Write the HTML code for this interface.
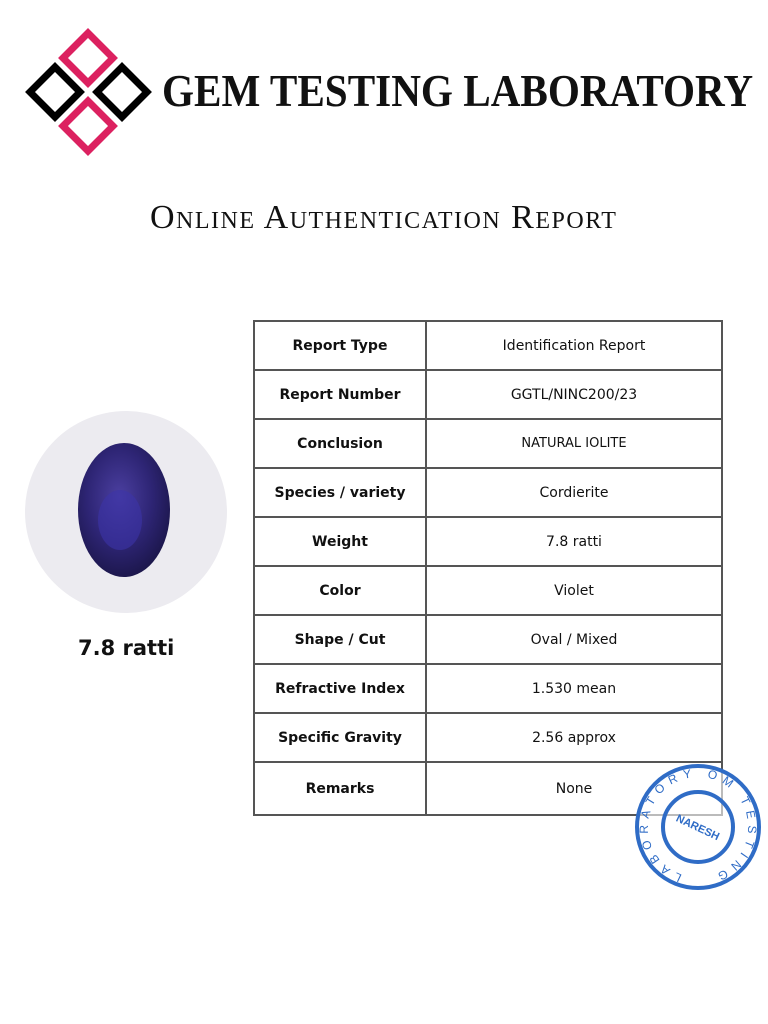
<!DOCTYPE html>
<html><head><meta charset="utf-8"><style>
body{margin:0;width:768px;height:1024px;background:#fff;position:relative;overflow:hidden;font-family:"Liberation Sans",sans-serif}
.t{position:absolute}
table{position:absolute;left:253px;top:320px;border-collapse:collapse;font-family:"DejaVu Sans","Liberation Sans",sans-serif;font-size:14px;color:#111}
td{border:2px solid #555;text-align:center;height:47px;padding:0}
td.a{width:170px;font-weight:bold}
td.b{width:294px}
</style></head><body>
<svg class="t" style="left:0;top:0" width="160" height="160">
<g fill="none" stroke-width="7">
<polygon points="88,33 113,58 88,83 63,58" stroke="#dc2160"/>
<polygon points="88,101 113,126 88,151 63,126" stroke="#dc2160"/>
<polygon points="55,67 80,92 55,117 30,92" stroke="#000"/>
<polygon points="122,67 147,92 122,117 97,92" stroke="#000"/>
</g></svg>
<div class="t" style="left:162px;top:64px;font-family:'Liberation Serif',serif;font-weight:bold;font-size:46px;color:#111;white-space:nowrap;transform:scaleX(0.895);transform-origin:0 0">GEM TESTING LABORATORY</div>
<div class="t" style="left:150px;top:199px;font-family:'Liberation Serif',serif;font-variant:small-caps;font-size:34px;color:#111;letter-spacing:1.5px;white-space:nowrap">Online Authentication Report</div>
<svg class="t" style="left:25px;top:410px" width="204" height="204">
<defs><radialGradient id="g" cx="45%" cy="40%" r="70%"><stop offset="0" stop-color="#4b3fa0"/><stop offset="0.5" stop-color="#2e2575"/><stop offset="1" stop-color="#16123e"/></radialGradient></defs>
<circle cx="101" cy="102" r="101" fill="#ecebf0"/>
<ellipse cx="99" cy="100" rx="46" ry="67" fill="url(#g)"/>
<ellipse cx="95" cy="110" rx="22" ry="30" fill="#3c33a8" opacity="0.6"/>
</svg>
<div class="t" style="left:78px;top:636px;font-family:'DejaVu Sans',sans-serif;font-weight:bold;font-size:21px;color:#111">7.8 ratti</div>
<table>
<tr><td class="a">Report Type</td><td class="b">Identification Report</td></tr>
<tr><td class="a">Report Number</td><td class="b">GGTL/NINC200/23</td></tr>
<tr><td class="a">Conclusion</td><td class="b" style="font-size:13px">NATURAL IOLITE</td></tr>
<tr><td class="a">Species / variety</td><td class="b">Cordierite</td></tr>
<tr><td class="a">Weight</td><td class="b">7.8 ratti</td></tr>
<tr><td class="a">Color</td><td class="b">Violet</td></tr>
<tr><td class="a">Shape / Cut</td><td class="b">Oval / Mixed</td></tr>
<tr><td class="a">Refractive Index</td><td class="b">1.530 mean</td></tr>
<tr><td class="a">Specific Gravity</td><td class="b">2.56 approx</td></tr>
<tr><td class="a" style="height:51px">Remarks</td><td class="b">None</td></tr>
</table>
<svg class="t" style="left:630px;top:759px" width="136" height="136">
<defs><path id="c" d="M68,118 a50,50 0 1,1 0,-100 a50,50 0 1,1 0,100"/></defs>
<circle cx="68" cy="68" r="61" fill="rgba(255,255,255,0.6)" stroke="#2f6cc6" stroke-width="4"/>
<circle cx="68" cy="68" r="35" fill="none" stroke="#2f6cc6" stroke-width="4"/>
<text font-family="Liberation Sans" font-size="12" fill="#2f6cc6" letter-spacing="6"><textPath href="#c" startOffset="5%">LABORATORY OM TESTING</textPath></text>
<text x="68" y="72" transform="rotate(25 68 68)" text-anchor="middle" font-family="Liberation Sans" font-weight="bold" font-size="11" fill="#2f6cc6">NARESH</text>
</svg>
</body></html>
